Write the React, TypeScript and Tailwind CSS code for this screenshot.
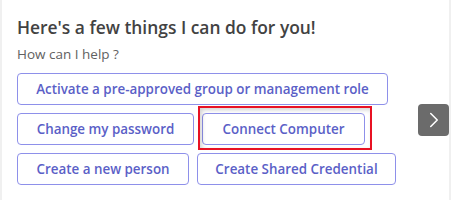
import { ChevronRight } from "lucide-react";

const ROWS: { label: string; width: string; highlight?: boolean }[][] = [
  [{ label: "Activate a pre-approved group or management role", width: "w-[371px]" }],
  [
    { label: "Change my password", width: "w-[177px]" },
    { label: "Connect Computer", width: "w-[163px]", highlight: true },
  ],
  [
    { label: "Create a new person", width: "w-[172px]" },
    { label: "Create Shared Credential", width: "w-[199px]" },
  ],
];

export default function App() {
  return (
    <div className="relative h-[200px] w-[451px] overflow-hidden bg-[#f0f0f0] font-['Segoe_UI','Open_Sans','Noto_Sans',sans-serif]">
      <div className="ml-[2px] h-full w-[447px] bg-white pl-[15px] pt-[15px]">
        <h2 className="text-[17.4px] font-semibold leading-[24px] text-[#424242]">
          Here's a few things I can do for you!
        </h2>
        <p className="mt-[6px] text-[13.5px] leading-[19px] text-[#616161]">How can I help ?</p>

        <div className="mt-[9px] flex flex-col gap-[8px]">
          {ROWS.map((row, i) => (
            <div key={i} className="flex gap-[8px]">
              {row.map((b) => (
                <div key={b.label} className="relative">
                  <button
                    className={`${b.width} h-[32px] whitespace-nowrap rounded-[4px] border border-[#8e90ea] bg-white text-center text-[13.4px] font-semibold text-[#5b5fc7]`}
                  >
                    {b.label}
                  </button>
                  {b.highlight && (
                    <div className="pointer-events-none absolute -bottom-[5px] -left-[4px] -right-[7px] -top-[7px] border-2 border-[#e81123] shadow-[inset_2px_2px_4px_rgba(0,0,0,0.18)]" />
                  )}
                </div>
              ))}
            </div>
          ))}
        </div>
      </div>

      <button className="absolute left-[418px] top-[104px] flex h-[32px] w-[31px] items-center justify-center rounded-[4px] bg-[#6b6b6b] text-white">
        <ChevronRight className="h-[26px] w-[26px]" strokeWidth={1.4} />
      </button>
    </div>
  );
}
